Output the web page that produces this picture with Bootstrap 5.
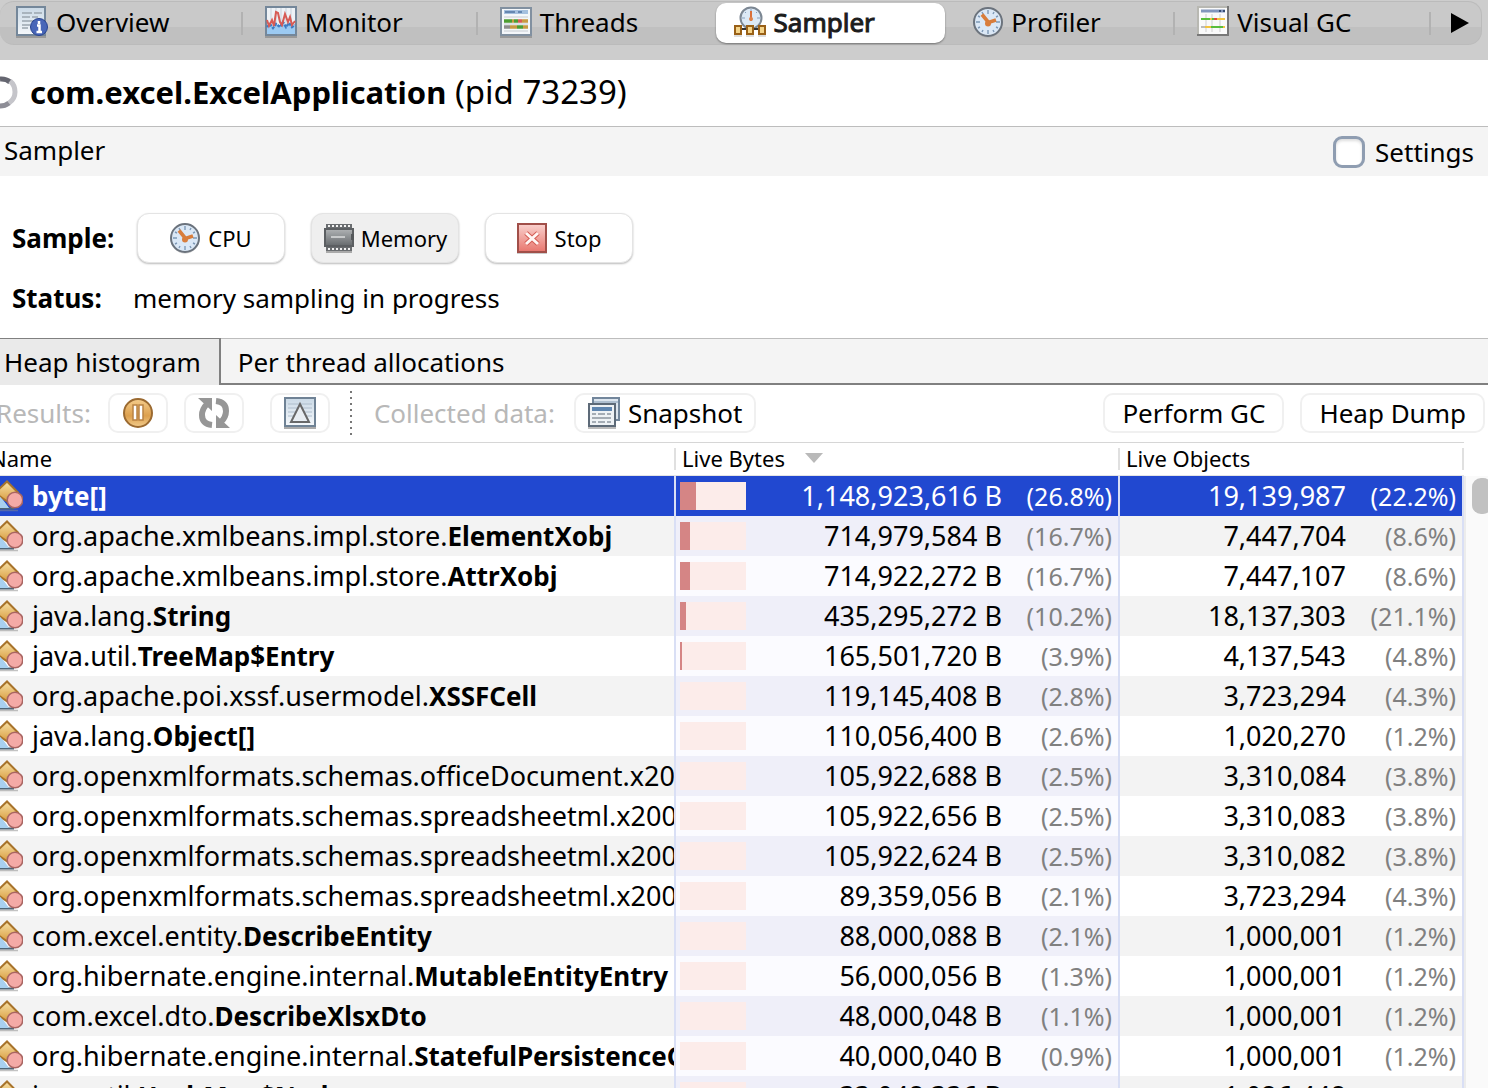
<!DOCTYPE html>
<html lang="en">
<head>
<meta charset="utf-8">
<meta name="viewport" content="width=device-width, initial-scale=1">
<title>VisualVM – Sampler</title>
<link href="https://cdn.jsdelivr.net/npm/bootstrap@5.3.0/dist/css/bootstrap.min.css" rel="stylesheet">
<style>
body{font-family:"Noto Sans","Open Sans",sans-serif;font-size:26px;line-height:36px;color:#000;background:#fff;height:100vh}
svg{display:block;flex:none}
.ico{width:32px;height:32px}
button{color:#000}
/* top tab strip */
.strip{background:#cdcdcd;height:60px;padding:1px 6px 15px 0}
.rail{display:grid;grid-template-columns:243fr 235fr 236fr 234fr 228fr 256fr 50fr;height:44px;border:1px solid #bbb;border-left:0;border-radius:14px;background:linear-gradient(#c9c9c9 0 25px,#c0c0c0 25px)}
.rail-tab{border:0;background:none;display:flex;align-items:center;gap:8px;padding:0 0 2px 22px;position:relative}
.rail-tab:first-child{padding-left:16px}
.rail-tab.ruled::after{content:"";position:absolute;right:0;top:10px;width:2px;height:23px;background:#b2b2b2}
.rail-tab.active{background:#fff;border-radius:10px;margin:1px 2px;padding-left:18px;box-shadow:0 1px 2px #0006;color:#1c1c1c;-webkit-text-stroke:1px #1c1c1c}
.rail-tab.active+.rail-tab{padding-left:26px;gap:6px}
.rail-tab:last-child{padding:0 0 0 20px}
.app-head{height:66px;gap:12px;font-size:33px;padding-bottom:2px}
.app-head b{font-size:31px}
.sub-head{height:50px;background:#f4f4f4;border-top:1px solid #bdbdbd;padding:0 14px 0 4px}
.sub-head>span{padding-bottom:4px}
.settings-pair{gap:10px}
.settings-box.form-check-input{width:32px;height:32px;border:3px solid #8f9db1;border-radius:9px;margin:0;box-shadow:inset 0 2px 3px #0002}
/* sampling controls */
.controls{padding:37px 12px 22px;height:162px}
.lbl{width:125px}
.lbl.narrow{width:121px}
.pushes{gap:26px}
.push{width:148px;height:50px;border:1px solid #e4e4e4;border-radius:12px;background:#fff;font-size:22px;box-shadow:0 1px 2px #0004;gap:6px;padding-bottom:2px}
.push.pressed{background:#efefef}
.sub-tabs{height:47px;background:#f4f4f4;border-top:1px solid #bdbdbd;border-bottom:2px solid #808080}
.sub-tab{border:0;background:none;padding:2px 18px 0 17px}
.sub-tab.active{background:#eaeaea;border-right:2px solid #808080;padding:0 18px 0 4px;margin-bottom:-2px;box-shadow:0 -1px #808080}
/* results toolbar */
.tools{height:57px;padding:0 3px 2px 0}
.muted-lbl{color:#b8b8b8}
.results-lbl{margin:0 1px 0 -4px}
.tool{height:40px;border:2px solid #f0f0f0;border-radius:10px;background:#fff;padding:0 12px;gap:8px}
.tool-sq{width:60px}
.tool-delta{margin-left:26px}
.tool-snap{margin-left:19px}
.tool-wide{padding:0 17px}
.dots{width:2px;height:44px;margin:0 22px 0 20px;background:repeating-linear-gradient(#777 0 2px,transparent 2px 6px)}
/* histogram */
.histo{table-layout:fixed;width:100%;border-collapse:separate;border-spacing:0}
.histo th{height:34px;border-top:1px solid #d6d6d6;border-bottom:1px solid #e4e4e4;font-weight:400;font-size:22px;line-height:30px;padding:0 0 2px 6px;background:linear-gradient(#e0e0e0,#e0e0e0) right 5px/2px 22px no-repeat}
.histo th:first-child{text-indent:-10px;padding-left:0}
.histo td{height:40px;padding:0;font-size:27px;line-height:40px;white-space:nowrap;overflow:hidden;border-right:2px solid #d9dff5}
.histo tbody tr:nth-child(even){background:#f3f3f3}
.histo td:nth-child(2){background:#fbfbff}
.histo tbody tr:nth-child(even) td:nth-child(2){background:#efeff9}
.histo tbody tr.picked,.histo tbody tr.picked td:nth-child(2){background:#2148d0;color:#fff}
.c-bytes{width:444px}.c-objs{width:344px}
.sort-mark{vertical-align:4px;margin-left:14px}
.cls{gap:9px}
.cls b{font-size:26px}
.cls,.num{display:flex;height:40px;align-items:center}
.num{justify-content:flex-end;padding:0 6px 0 4px}
.pct{width:110px;text-align:right;font-size:25px;color:#808080}
.picked .pct{color:#fff}
.meter{width:66px;height:28px;background:#fcecea;margin-right:auto}
.meter i{display:block;height:100%;background:#d58585}
.track{width:24px;border-left:2px solid #ececec;background:#fafafa;margin-top:34px;padding:2px 0 0 6px}
.thumb{height:36px;width:20px;border-radius:9px;background:#c1c1c1}
</style>
<script src="https://cdn.jsdelivr.net/npm/bootstrap@5.3.0/dist/js/bootstrap.bundle.min.js"></script>
</head>
<body class="d-flex flex-column overflow-hidden pb-1">
<svg width="0" height="0" class="position-absolute" aria-hidden="true">
<defs>
<linearGradient id="gold" x1="0" y1="0" x2="0" y2="1"><stop offset="0" stop-color="#f8e2a8"/><stop offset="1" stop-color="#d79a3c"/></linearGradient>
<linearGradient id="red" x1="0" y1="0" x2="0" y2="1"><stop offset="0" stop-color="#fad2ce"/><stop offset="1" stop-color="#e8756d"/></linearGradient>
<linearGradient id="page" x1="0" y1="0" x2="0" y2="1"><stop offset="0" stop-color="#cad9e6"/><stop offset="1" stop-color="#f5f8fb"/></linearGradient>
<linearGradient id="chip" x1="0" y1="0" x2="0" y2="1"><stop offset="0" stop-color="#b0b3b5"/><stop offset="1" stop-color="#65696c"/></linearGradient>
<linearGradient id="coin" x1="0" y1="0" x2="0" y2="1"><stop offset="0" stop-color="#f5cd8c"/><stop offset=".6" stop-color="#dda04e"/><stop offset="1" stop-color="#f2cc8c"/></linearGradient>
<symbol id="i-clock" viewBox="0 0 32 32"><circle cx="15" cy="17" r="14.500" fill="#999" opacity=".5"/><circle cx="15" cy="16" r="14" fill="#dbe8f6" stroke="#6b737d" stroke-width="2"/><path d="M15 4v4M15 24v4M3 16h4M23 16h4M9 6l1 2M21 6l-1 2M5 10l2 1M25 10l-2 1M5 22l2-1M25 22l-2-1M9 26l1-2M21 26l-1-2" stroke="#7e99b6" stroke-width="1.400"/><path d="M9 8.500l6.500 8L23 14" fill="none" stroke="#d87d3c" stroke-width="3.600"/><circle cx="15" cy="17.500" r="3" fill="#d87d3c"/></symbol>
<symbol id="i-class" viewBox="0 0 23 32"><path d="M-2 30.500H18" stroke="#888" stroke-width="1.500" opacity=".5"/><path d="M-6 10L0 16L9 28H-6Z" fill="#a8d0f0"/><path d="M-2 28.500H14" stroke="#4e6577" stroke-width="2"/><path d="M-5 13L7 1.500 18 12.500 8 22Z" fill="url(#gold)" stroke="#a8732a" stroke-width="2"/><path d="M-2 14L9 28H-2z" fill="#a8d0f0"/><circle cx="15" cy="20" r="7.800" fill="#f4aaa6" stroke="#a96562" stroke-width="1.600"/></symbol>
</defs></svg>

<header class="strip flex-shrink-0">
<nav class="rail" aria-label="Views">
<button class="rail-tab ruled"><svg class="ico" viewBox="0 0 32 32"><path d="M0 31h30" stroke="#999" stroke-width="2"/><rect x="1" y="1" width="28" height="28" fill="url(#page)" stroke="#74879a" stroke-width="2"/><path d="M6 7h10M18 7h8M6 11h8M16 11h6M6 15h12M6 19h8M6 22h6" stroke="#9aa5af" stroke-width="1.500"/><circle cx="23" cy="21" r="8.500" fill="#4866b8" stroke="#27428f"/><path d="M23 15v3M21 19.500h2.500V25M20.500 26h5.500" stroke="#fff" stroke-width="2.500" fill="none"/></svg>Overview</button>
<button class="rail-tab ruled"><svg class="ico" viewBox="0 0 32 32"><path d="M0 31h32" stroke="#999" stroke-width="2"/><rect x="1" y="1" width="30" height="28" fill="#eef2f6" stroke="#74879a" stroke-width="2"/><path d="M6 2v18M11 2v18M16 2v18M21 2v18M26 2v18" stroke="#c8d2dc"/><path d="M2 20l3-2 3 4 3-4 4 3 3-5 3 5 3-4 3 4 3-2v9H2z" fill="#9ccaf2"/><path d="M2 21l3-3 3 4 3-4 4 3 3-5 3 5 3-4 3 4 3-2" fill="none" stroke="#3b7cc4" stroke-width="2.400" stroke-dasharray="3 1"/><path d="M2 14l2 6 3-6 2 6 2-14 2 1 2 9 2 3 3-11 3 8 2-5 2 8 3-4" fill="none" stroke="#d75b55" stroke-width="2"/></svg>Monitor</button>
<button class="rail-tab"><svg class="ico" viewBox="0 0 32 32"><path d="M0 31h32" stroke="#999" stroke-width="2"/><rect x="1" y="2" width="30" height="27" fill="#f4f7fa" stroke="#8190a0" stroke-width="2"/><path d="M4 6h24" stroke="#a5c0df" stroke-width="4"/><path d="M5 6h10M18 6h4" stroke="#6587b1" stroke-width="2"/><path d="M4 11h24M4 18h24M4 25h24" stroke="#c7ccd2"/><path d="M4 15h8M14 15h4" stroke="#4c9d32" stroke-width="3.500"/><path d="M12 15h2M22 15h6" stroke="#c79a42" stroke-width="3.500"/><path d="M18 15h4" stroke="#db5b50" stroke-width="3.500"/><path d="M4 21h6" stroke="#8d8d8d" stroke-width="3.500"/><path d="M10 21h7M23 21h5" stroke="#c79a42" stroke-width="3.500"/><path d="M17 21h6" stroke="#4c9d32" stroke-width="3.500"/></svg>Threads</button>
<button class="rail-tab active" aria-current="page"><svg class="ico" viewBox="0 0 32 32"><circle cx="17" cy="12" r="10.500" fill="#dce9f6" stroke="#7c8793" stroke-width="2"/><path d="M17 3v3M8 12h3M23 12h3M11 6l1 1M23 6l-1 1" stroke="#88a1bd"/><path d="M17 5v10" stroke="#d9703a" stroke-width="2"/><circle cx="17" cy="13" r="2" fill="#df8148"/><path d="M8 23h16" stroke="#333" stroke-width="2"/><g fill="#f4d48a" stroke="#996017" stroke-width="2"><path d="M1 20h6v8H1zM13 20h6v8h-6zM25 20h6v8h-6z"/></g><path d="M0 30h8M12 30h8M24 30h8" stroke="#bbb"/></svg>Sampler</button>
<button class="rail-tab ruled"><svg class="ico"><use href="#i-clock"/></svg>Profiler</button>
<button class="rail-tab ruled"><svg class="ico" viewBox="0 0 32 32"><rect x="1" y="1" width="30" height="28" fill="#fafafa"/><path d="M1 30V1h30" fill="none" stroke="#b8b8b2" stroke-width="2"/><path d="M0 29h31V0" fill="none" stroke="#777" stroke-width="2"/><path d="M4 5h24" stroke="#8296bd" stroke-width="3"/><path d="M22 5h2M26 5h2" stroke="#354b72" stroke-width="2"/><path d="M9 8v18M15 8v18M23 8v18" stroke="#ddd" stroke-width="1.500"/><path d="M4 13h9M15 13h2" stroke="#59bd3c" stroke-width="2"/><path d="M13 13h2M20 13h8" stroke="#f2c33f" stroke-width="2"/><path d="M17 13h3" stroke="#e04c3e" stroke-width="2"/><path d="M4 21h4" stroke="#bbb" stroke-width="2"/><path d="M8 21h6M26 21h2" stroke="#f2c33f" stroke-width="2"/><path d="M14 21h12" stroke="#59bd3c" stroke-width="2"/></svg>Visual GC</button>
<button class="rail-tab" aria-label="More views"><svg width="18" height="20" viewBox="0 0 18 20"><path d="M0 0l18 10L0 20z"/></svg></button>
</nav>
</header>

<div class="app-head d-flex align-items-center flex-shrink-0">
<svg width="18" height="34" viewBox="0 0 18 34"><path d="M0 4q6-.5 10 3" fill="none" stroke="#656670" stroke-width="5"/><path d="M10 6q5 4 5 11 0 7-6 11" fill="none" stroke="#c5c5ca" stroke-width="5"/><path d="M9 28q-4 3-9 3" fill="none" stroke="#8d8d96" stroke-width="5"/></svg>
<div><b>com.excel.ExcelApplication</b> (pid 73239)</div>
</div>
<div class="sub-head d-flex align-items-center justify-content-between flex-shrink-0">
<span>Sampler</span>
<div class="settings-pair d-flex align-items-center"><input class="form-check-input settings-box" type="checkbox" id="settings"><label for="settings">Settings</label></div>
</div>

<section class="controls flex-shrink-0 d-flex flex-column justify-content-between">
<div class="d-flex align-items-center"><b class="lbl">Sample:</b>
<div class="pushes d-flex">
<button class="push d-flex align-items-center justify-content-center"><svg class="ico"><use href="#i-clock"/></svg>CPU</button>
<button class="push pressed d-flex align-items-center justify-content-center" aria-pressed="true"><svg class="ico" viewBox="0 0 32 32"><path d="M3 30h26" stroke="#aaa" stroke-width="2"/><path d="M3 2h26v27H3z" fill="#6a6d70"/><path d="M5 4h23M5 27h23" stroke="#f2f2f2" stroke-width="2" stroke-dasharray="2 2"/><rect x="2" y="7" width="28" height="17" fill="url(#chip)" stroke="#5c5f62" stroke-width="2"/><path d="M8 15h14" stroke="#c8cacb" stroke-width="2"/><path d="M31 12h-3v6h3" fill="#55585b"/></svg>Memory</button>
<button class="push d-flex align-items-center justify-content-center"><svg class="ico" viewBox="0 0 32 32"><path d="M0 31h30" stroke="#ccc" stroke-width="2"/><rect x="1" y="2" width="28" height="28" fill="url(#red)" stroke="#a14f49" stroke-width="2"/><path d="M9 11l12 11M21 11L9 22" stroke="#d45b52" stroke-width="5"/><path d="M9 11l12 11M21 11L9 22" stroke="#fff5f3" stroke-width="3"/></svg>Stop</button>
</div></div>
<div class="d-flex align-items-center"><b class="lbl narrow">Status:</b><span>memory sampling in progress</span></div>
</section>

<nav class="sub-tabs d-flex flex-shrink-0" aria-label="Results views">
<button class="sub-tab active" aria-current="page">Heap histogram</button>
<button class="sub-tab">Per thread allocations</button>
</nav>

<div class="tools d-flex align-items-center flex-shrink-0">
<span class="muted-lbl results-lbl">Results:</span>
<button class="tool tool-sq d-flex align-items-center ms-3" aria-label="Pause"><svg class="ico" viewBox="0 0 32 32"><circle cx="16" cy="16" r="14" fill="url(#coin)" stroke="#9b6a31" stroke-width="2"/><path d="M11 8h4v15h-4zM17 8h4v15h-4z" fill="#fff" stroke="#b98344" stroke-width="1.500"/></svg></button>
<button class="tool tool-sq d-flex align-items-center ms-3" aria-label="Refresh"><svg class="ico" viewBox="0 0 32 32"><path d="M14 28Q4 27 4 18 4 12 9 7M18 4q10 1 10 10 0 6-5 11" fill="none" stroke="#969696" stroke-width="6"/><path d="M0 1h14v13zM32 31H18V18z" fill="#969696"/></svg></button>
<button class="tool tool-sq tool-delta d-flex align-items-center" aria-label="Show deltas"><svg class="ico" viewBox="0 0 32 32"><path d="M0 31h32" stroke="#aaa" stroke-width="2"/><rect x="1" y="1" width="30" height="28" fill="url(#page)" stroke="#6f8295" stroke-width="2"/><path d="M4 7h24M4 11h24M4 15h24M4 19h24" stroke="#aebdcc"/><path d="M16 7L25 25H7z" fill="#e8edf2" stroke="#686868" stroke-width="2"/></svg></button>
<div class="dots"></div>
<span class="muted-lbl">Collected data:</span>
<button class="tool tool-snap d-flex align-items-center me-auto"><svg class="ico" viewBox="0 0 32 32"><rect x="5" y="1" width="26" height="22" fill="#dce5ee" stroke="#72869b" stroke-width="2"/><path d="M6 5h24" stroke="#aebfd0" stroke-width="2"/><path d="M0 31h28" stroke="#bbb" stroke-width="2"/><rect x="1" y="7" width="26" height="22" fill="#eef2f5" stroke="#5d6a78" stroke-width="2"/><path d="M4 12h20" stroke="#5f86b0" stroke-width="4"/><path d="M4 17h4M10 17h7M19 17h4M4 21h19M4 25h4M10 25h7M19 25h4" stroke="#a5adb5" stroke-width="1.800"/></svg>Snapshot</button>
<button class="tool tool-wide me-3">Perform GC</button>
<button class="tool tool-wide">Heap Dump</button>
</div>

<main class="d-flex flex-grow-1 overflow-hidden">
<div class="flex-grow-1 overflow-hidden">
<table class="histo">
<colgroup><col><col class="c-bytes"><col class="c-objs"></colgroup>
<thead><tr><th>Name</th><th>Live Bytes <svg class="sort-mark d-inline-block" width="18" height="10" viewBox="0 0 18 10"><path d="M0 0h18l-9 10z" fill="#b9b9b9"/></svg></th><th>Live Objects</th></tr></thead>
<tbody id="rows"></tbody>
</table>
</div>
<div class="track flex-shrink-0"><div class="thumb"></div></div>
</main>
<script>
// package, class, bytes, bytes %, objects, objects %, bar pixels
const data=[
["","byte[]","1,148,923,616","26.8","19,139,987","22.2",16],
["org.apache.xmlbeans.impl.store.","ElementXobj","714,979,584","16.7","7,447,704","8.6",10],
["org.apache.xmlbeans.impl.store.","AttrXobj","714,922,272","16.7","7,447,107","8.6",10],
["java.lang.","String","435,295,272","10.2","18,137,303","21.1",6],
["java.util.","TreeMap$Entry","165,501,720","3.9","4,137,543","4.8",2],
["org.apache.poi.xssf.usermodel.","XSSFCell","119,145,408","2.8","3,723,294","4.3",0],
["java.lang.","Object[]","110,056,400","2.6","1,020,270","1.2",0],
["org.openxmlformats.schemas.officeDocument.x2006","","105,922,688","2.5","3,310,084","3.8",0],
["org.openxmlformats.schemas.spreadsheetml.x2006","","105,922,656","2.5","3,310,083","3.8",0],
["org.openxmlformats.schemas.spreadsheetml.x2006","","105,922,624","2.5","3,310,082","3.8",0],
["org.openxmlformats.schemas.spreadsheetml.x2006","","89,359,056","2.1","3,723,294","4.3",0],
["com.excel.entity.","DescribeEntity","88,000,088","2.1","1,000,001","1.2",0],
["org.hibernate.engine.internal.","MutableEntityEntry","56,000,056","1.3","1,000,001","1.2",0],
["com.excel.dto.","DescribeXlsxDto","48,000,048","1.1","1,000,001","1.2",0],
["org.hibernate.engine.internal.","StatefulPersistenceC","40,000,040","0.9","1,000,001","1.2",0],
["java.util.","HashMap$Node","33,048,336","0.8","1,026,448","1.2",0]];
document.getElementById("rows").innerHTML=data.map((r,i)=>`<tr${i?"":' class="picked"'}><td><div class="cls"><svg width="23" height="32"><use href="#i-class"/></svg><span>${r[0]}<b>${r[1]}</b></span></div></td><td><div class="num"><div class="meter">${r[6]?`<i style="width:${r[6]}px"></i>`:""}</div><span>${r[2]} B</span><span class="pct">(${r[3]}%)</span></div></td><td><div class="num"><span>${r[4]}</span><span class="pct">(${r[5]}%)</span></div></td></tr>`).join("");
</script>
</body>
</html>
